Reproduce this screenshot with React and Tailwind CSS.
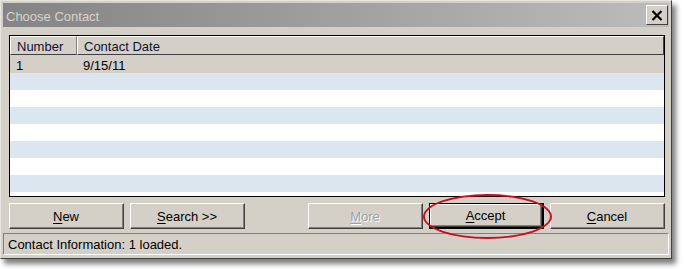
const rows = [
  { num: '1', date: '9/15/11' },
];

const stripes = ['bg-[#dce6f0]', 'bg-white', 'bg-[#dce6f0]', 'bg-white', 'bg-[#dce6f0]', 'bg-white', 'bg-[#dce6f0]', 'bg-white'];

const WinButton = ({ label, hot, rest, disabled, isDefault }) => (
  <div className={`w-[115px] h-[26px] ${isDefault ? 'border border-black border-b-2 border-r-2' : ''}`}>
    <div className="w-full h-full border-t border-l border-white border-b border-r border-b-[#404040] border-r-[#404040] bg-[#d4d0c8]">
      <div className="w-full h-full pt-[1px] flex items-center justify-center border-b border-r border-b-[#808080] border-r-[#808080]">
        <span
          className={`text-[13px] leading-none ${disabled ? 'text-[#a0a0a0] [text-shadow:1px_1px_0_#ffffff]' : 'text-black'}`}
        >
          <span className="underline underline-offset-2">{hot}</span>
          {rest}
        </span>
      </div>
    </div>
  </div>
);

const App = () => {
  return (
    <div className="w-[684px] h-[269px] bg-white relative font-['Liberation_Sans',Arial,sans-serif]">
      {/* dialog window */}
      <div className="w-[672px] h-[259px] bg-[#d4d0c8] border border-t-[#e8e6e0] border-l-[#e8e6e0] border-b-[#404040] border-r-[#404040] p-[2px] flex flex-col shadow-[4px_5px_5px_rgba(0,0,0,0.5)]">
        {/* title bar */}
        <div className="h-[24px] shrink-0 flex items-center pl-[3px] pr-[1px] bg-gradient-to-r from-[#848484] to-[#bcbcbc]">
          <span className="text-[13px] pt-[2px] text-[#d8d4cc] leading-none">Choose Contact</span>
          <div className="ml-auto w-[22px] h-[20px] bg-[#d4d0c8] border border-t-white border-l-white border-b-[#404040] border-r-[#404040] flex items-center justify-center">
            <svg width="12" height="11" viewBox="0 0 12 11">
              <path d="M1.5 1 L10.5 10 M10.5 1 L1.5 10" stroke="#000" strokeWidth="2.2" />
            </svg>
          </div>
        </div>

        <div className="flex flex-col pl-[6px] pr-[4px]">
          {/* list */}
          <div className="mt-[8px] h-[162px] border border-black bg-white overflow-hidden flex flex-col">
            <div className="h-[19px] shrink-0 flex text-[13px] text-[#101030] leading-none">
              <div className="w-[67px] flex items-center pl-[6px] pt-[2px] bg-[#d4d0c8] border-t border-l border-white border-b border-r border-b-[#404040] border-r-[#808080]">
                Number
              </div>
              <div className="flex-1 flex items-center pl-[6px] pt-[2px] bg-[#d4d0c8] border-t border-l border-white border-b border-r border-b-[#404040] border-r-[#404040]">
                Contact Date
              </div>
            </div>
            {rows.map((r) => (
              <div key={r.num} className="h-[18px] shrink-0 flex items-center pt-[3px] bg-[#d4d0c8] text-[13px] text-black leading-none">
                <div className="w-[67px] pl-[6px]">{r.num}</div>
                <div className="pl-[6px]">{r.date}</div>
              </div>
            ))}
            {stripes.map((c, i) => (
              <div key={i} className={`h-[17px] shrink-0 ${c}`} />
            ))}
          </div>

          {/* buttons */}
          <div className="mt-[6px] flex justify-between">
            <div className="flex gap-[6px]">
              <WinButton hot="N" rest="ew" />
              <WinButton hot="S" rest="earch >>" />
            </div>
            <div className="flex gap-[6px]">
              <WinButton hot="M" rest="ore" disabled />
              <WinButton hot="A" rest="ccept" isDefault />
              <WinButton hot="C" rest="ancel" />
            </div>
          </div>
        </div>

        {/* status bar */}
        <div className="mt-[4px] h-[22px] flex items-center pl-[4px] pt-[1px] border border-t-[#808080] border-l-[#808080] border-b-white border-r-white text-[13px] text-black leading-none">
          Contact Information: 1 loaded.
        </div>
      </div>

      {/* red highlight around Accept */}
      <div className="absolute left-[423px] top-[194px] w-[129px] h-[45px] rounded-[50%] border-2 border-[#c8101e]" />
    </div>
  );
};

export default App;
